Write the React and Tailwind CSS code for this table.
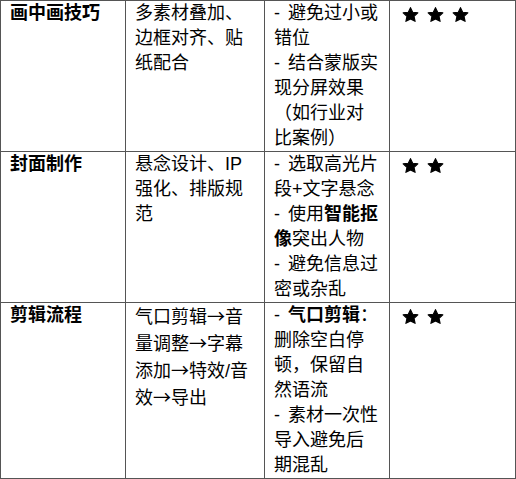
const Star = () => (
  <svg width="17" height="15" viewBox="0 0 24 21" className="block mr-[8px]">
    <path
      d="M12 0.8 L15.1 7.3 L22.4 8.1 L17 13.1 L18.5 20.2 L12 16.7 L5.5 20.2 L7 13.1 L1.6 8.1 L8.9 7.3 Z"
      fill="#000"
      stroke="#000"
      strokeWidth="1.6"
      strokeLinejoin="round"
    />
  </svg>
);

// dash a little wider like the source doc
const D = () => <span className="mr-[3px]">- </span>;
const Arr = () => <span className="font-['Noto_Sans_CJK_SC']">→</span>;

const rows = [
  {
    name: "画中画技巧",
    desc: "多素材叠加、边框对齐、贴纸配合",
    tips: (
      <>
        <D />避免过小或错位
        <br />
        <D />结合蒙版实现分屏效果（如行业对比案例）
      </>
    ),
    stars: 3,
  },
  {
    name: "封面制作",
    desc: "悬念设计、IP强化、排版规范",
    tips: (
      <>
        <D />选取高光片段+文字悬念
        <br />
        <D />使用<b className="font-bold">智能抠像</b>突出人物
        <br />
        <D />避免信息过密或杂乱
      </>
    ),
    stars: 2,
  },
  {
    name: "剪辑流程",
    desc: (
      <>
        气口剪辑<Arr />音量调整<Arr />字幕添加<Arr />特效/音效<Arr />导出
      </>
    ),
    tips: (
      <>
        <D /><b className="font-bold">气口剪辑</b>：删除空白停顿，保留自然语流
        <br />
        <D />素材一次性导入避免后期混乱
      </>
    ),
    stars: 2,
  },
];

const cell = "border border-[#555] align-top px-[9px] pt-0 pb-0";

export default function App() {
  return (
    <div
      className="bg-white w-[516px] h-[479px] text-black text-[18px] leading-[25px]"
      style={{ fontFamily: '"Liberation Sans", "Noto Sans CJK SC", sans-serif' }}
    >
      <table className="border-collapse table-fixed w-[515px]">
        <colgroup>
          <col className="w-[125px]" />
          <col className="w-[139px]" />
          <col className="w-[125px]" />
          <col className="w-[126px]" />
        </colgroup>
        <tbody>
          {rows.map((r) => (
            <tr key={r.name}>
              <td className={cell + " font-bold"}>{r.name}</td>
              <td className={cell}>{r.desc}</td>
              <td className={cell}>{r.tips}</td>
              <td className={cell + " pl-[12px] pt-[6px]"}>
                <div className="flex">
                  {Array.from({ length: r.stars }).map((_, i) => (
                    <Star key={i} />
                  ))}
                </div>
              </td>
            </tr>
          ))}
        </tbody>
      </table>
    </div>
  );
}
